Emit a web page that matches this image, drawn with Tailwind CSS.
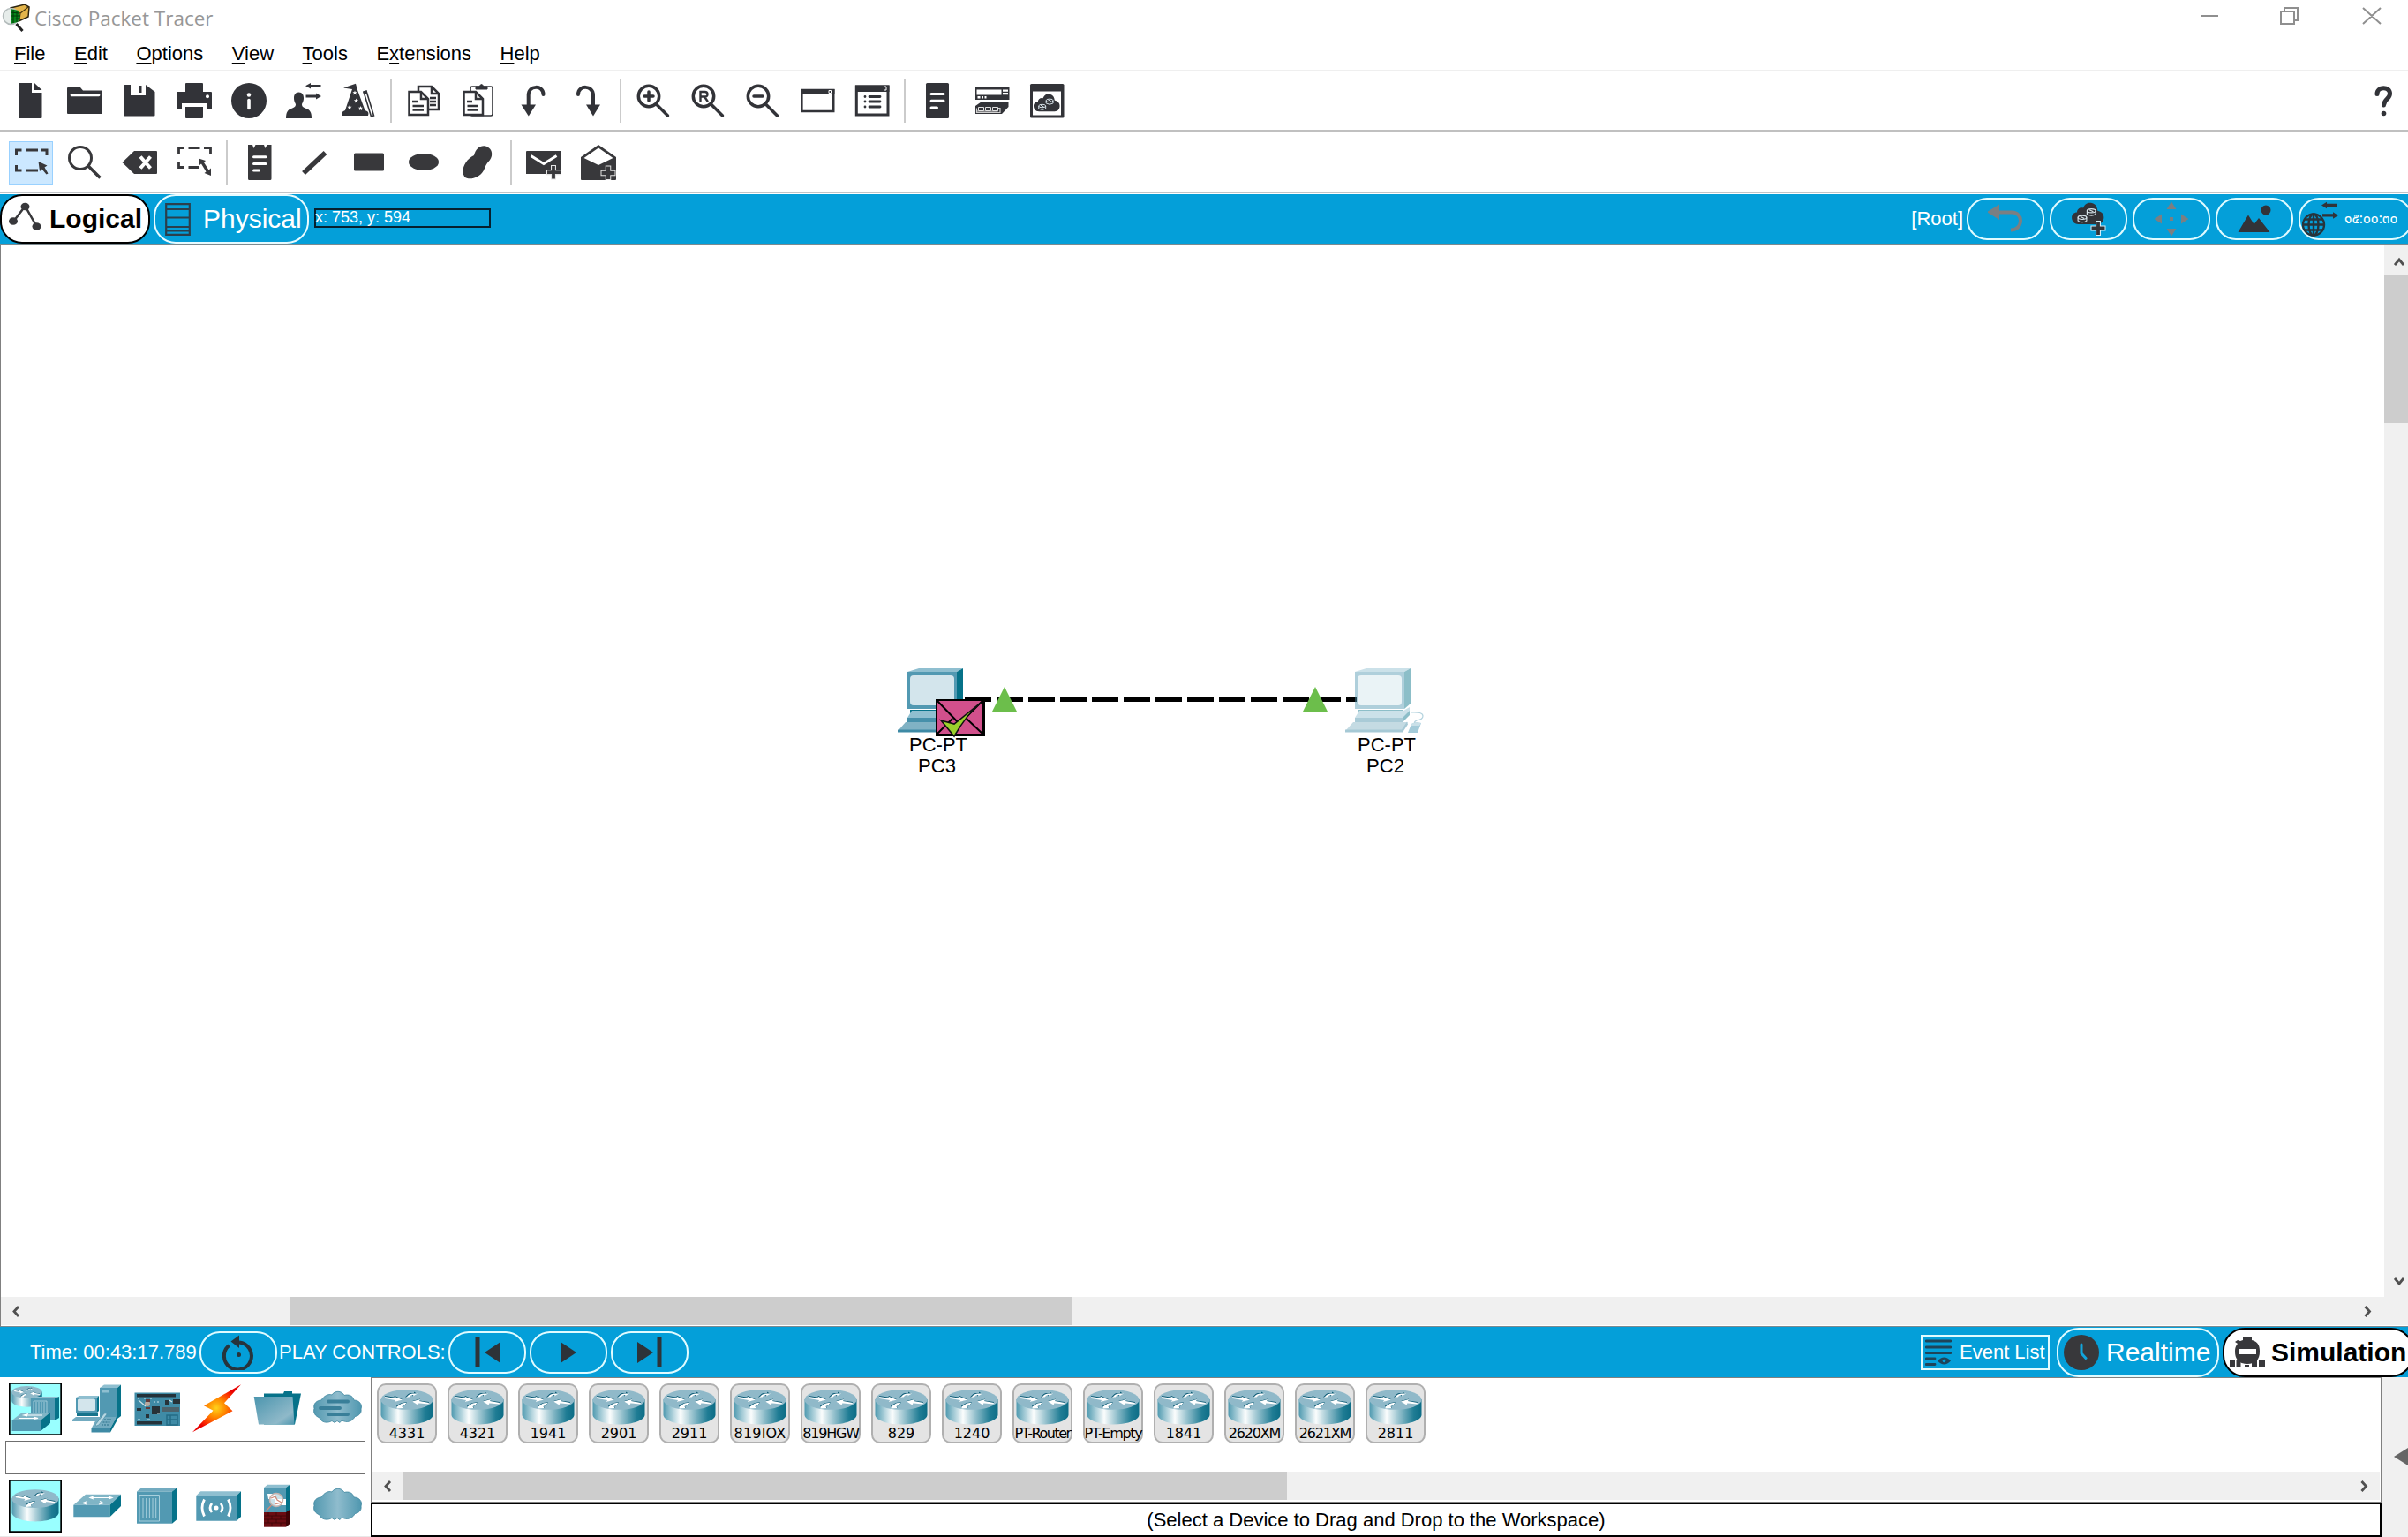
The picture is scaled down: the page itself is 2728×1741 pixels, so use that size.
<!DOCTYPE html>
<html lang="en">
<head>
<meta charset="utf-8">
<title>Cisco Packet Tracer</title>
<script src="https://cdn.jsdelivr.net/npm/@tailwindcss/browser@4"></script>
</head>
<body class="bg-white overflow-hidden">
<svg class="absolute w-0 h-0" aria-hidden="true">
  <defs>
    <linearGradient id="rb"><stop offset="0" stop-color="#4f9ab0"/><stop offset=".12" stop-color="#8fbfcd"/><stop offset=".33" stop-color="#fbfdfd"/><stop offset=".6" stop-color="#86b8c6"/><stop offset=".85" stop-color="#1f7c94"/><stop offset="1" stop-color="#0d6d86"/></linearGradient>
    <linearGradient id="cl"><stop offset="0" stop-color="#5399b0"/><stop offset=".5" stop-color="#8fbccd"/><stop offset="1" stop-color="#4f97af"/></linearGradient>
    <linearGradient id="fo" x1="0" y1="0" x2="1" y2="1"><stop offset="0" stop-color="#4b95ae"/><stop offset=".75" stop-color="#8fb9c9"/><stop offset="1" stop-color="#4b95ae"/></linearGradient>
    <radialGradient id="bo" gradientUnits="userSpaceOnUse" cx="29" cy="29" r="26"><stop offset="0" stop-color="#ffd21a"/><stop offset=".4" stop-color="#ff8a00"/><stop offset=".8" stop-color="#fb2a00"/><stop offset="1" stop-color="#e80000"/></radialGradient>
    <symbol id="router" viewBox="0 0 60 40" preserveAspectRatio="none">
      <path d="M.5 11V28.500C.5 34.500 13.500 39.500 30 39.500S59.500 34.500 59.500 28.500V11z" fill="url(#rb)"/>
      <ellipse cx="30" cy="11.500" rx="29.500" ry="11.300" fill="#90b9c9"/>
      <path d="M5 7l10 1.500 1-1.500 9 4-8 2.500 1-2L5.500 9zM28 8.500l3-3c2-2 4-1.500 7-1.500l0-1.500 3 2-5 3 .5-1.500c-2.500 0-3 .5-5 2.500zM36 13l9-2.500-1 2 11 1.500-.5 2-11-1-1 2zM18 18.500l5-3c2-1 4-1 7-1l-2 3-3 1.500 1 2-7 0z" fill="#0b5a75"/>
      <path d="M5 8l10 1.500 1-1.500 9 3.500-9 2.500 1-2L5.500 10zM29 9l3-3c2-1.500 4-1.500 7-1.500l3 0-5 3 .5-1.500c-2.500 0-3 .5-5 2.500zM36 13.500l9-2.500-1 2 11 2-.5 1.500-11-1-1 2zM18.500 19.500l5-3.500c2-1 3-1 6-1l-2 2.500-3 1.500 1 2-7 .5z" fill="#fff"/>
    </symbol>
    <symbol id="cloud" viewBox="0 0 60 60"><path d="M9 40C4 38 1.500 34 3 29.500 1.500 24 6 20 11 20 14 15 19 12.500 23 14 26 9 34 9 37 14.500 42 13 47 15 48 20 54 20 58 25 56 30 57 35 53 38 49 38.500 47 43.500 41 45.500 37 44L34 43 32 45.500 29 43.500 26 45.500 23 43.500C18 46.500 11 45.500 9 40z" fill="url(#cl)" stroke="#3f87a0" stroke-width=".8"/></symbol>
    <symbol id="pc" viewBox="0 0 100 76">
      <path d="M11 5L24 1H74L67 5z" fill="#8fbfd0"/><path d="M67 5l7-4v40l-7 6z" fill="#067289"/><path d="M11 5H67V47H11z" fill="#5299b2"/><path d="M14 13q0-4 4-4H60q4 0 4 4V39q0 4-4 4H18q-4 0-4-4z" fill="#d3e5ec"/>
      <path d="M14 48H66V52H14z" fill="#067289"/><path d="M11 57l5-8H66l7-4v6l-8 11H11z" fill="#8fbfd0"/><path d="M11 57H65v5H11z" fill="#4690aa"/><path d="M65 57l8-8v5l-8 8z" fill="#067289"/><path d="M16 62H64V67H16z" fill="#0c7890"/>
      <path d="M8 61H70L64 70H0z" transform="translate(1 1)" fill="#80b2c4"/><path d="M0 70H64l6-9 1 3-6 9H0z" transform="translate(0 .5)" fill="#3e8aa5"/>
    </symbol>
    <symbol id="netcloud" viewBox="0 0 34 24"><path d="M7 23C2 23 0 19.500 0 16 0 12.500 2.500 10.500 5.500 10.500 5.500 7 9 5 12 6 14 1 18 0 21 1 25 2 26.500 5 27 9 31 10 33.500 12 33.500 16 33.500 20 31 23 27 23z" fill="#323338"/><g fill="none" stroke="#d8e4ea" stroke-width="1.100"><ellipse cx="11" cy="16" rx="4.500" ry="2"/><path d="M6.500 16v3.500q4.500 3 9 0V16"/><ellipse cx="20.500" cy="9" rx="4.500" ry="2"/><path d="M16 9v3.500q4.500 3 9 0V9M9 15l4 2M18.500 8l4 2"/></g></symbol>
  </defs>
</svg>

<div class="w-[2728px] h-[1741px] flex flex-col overflow-hidden bg-white font-['Liberation_Sans',Arial,sans-serif] text-[22px] text-black leading-none">

  <!-- Title bar -->
  <header class="h-[41px] shrink-0 flex items-start justify-between">
    <div class="flex items-start">
      <svg class="w-[34px] h-[36px] ml-[2px] mt-[2px]" viewBox="0 0 34 36"><path d="M10 7L26 3 31 6 30 17 19 22 11 12z" fill="#e3b44a" stroke="#2b2310" stroke-width="1.500"/><path d="M11 8l10 5 9-7M21 13l-1 8" fill="none" stroke="#4a3810" stroke-width="1.200"/><circle cx="10.500" cy="16.500" r="9" fill="#e6ecea" stroke="#b4bcbc" stroke-width="1.500"/><path d="M10 8l9 2 2 7-3 6-8 2z" fill="#07851a"/><path d="M10 12l9 1M10 16h11M10 20l9-1M13 9v15M17 10v13" stroke="#023b08"/><path d="M16.500 25l7 8" stroke="#222" stroke-width="3"/></svg>
      <div class="ml-[3px] mt-[7px] font-['Open_Sans',sans-serif] text-[22.500px] text-[#979797] leading-[28px] whitespace-nowrap">Cisco Packet Tracer</div>
    </div>
    <svg class="w-[220px] h-[36px] mr-[23px]" viewBox="0 0 220 36" fill="none" stroke="#8f8f8f" stroke-width="2"><path d="M8 18H28M99 13h15v14h-15zM103 13V9h15v14h-4M192 9l20 18M212 9l-20 18"/></svg>
  </header>

  <!-- Menu bar -->
  <nav class="h-[39px] shrink-0 flex items-center gap-[32.500px] pl-[16px] pt-[2px] border-b border-[#efefef] [&_u]:underline-offset-[3px] [&_u]:decoration-[1px]">
    <span><u>F</u>ile</span><span><u>E</u>dit</span><span><u>O</u>ptions</span><span><u>V</u>iew</span><span><u>T</u>ools</span><span>E<u>x</u>tensions</span><span><u>H</u>elp</span>
  </nav>

  <!-- Main toolbar -->
  <div class="h-[69px] shrink-0 flex items-start justify-between border-b-2 border-[#c0c0c0] pl-[3px]">
    <div class="flex items-start text-[#323338] [&>div]:w-[62px] [&>div]:pt-[14px] [&>div]:flex [&>div]:justify-center [&_svg]:w-[40px] [&_svg]:h-[40px] [&>i]:w-[2px] [&>i]:h-[50px] [&>i]:mt-[9px] [&>i]:mx-[5px] [&>i]:bg-[#cbcbcb]">
      <div><svg viewBox="0 0 40 40" fill="currentColor"><path d="M8 0H22V11H33.500V39q0 1-1 1H8q-1 0-1-1V1q0-1 1-1zM25 0l8.500 8H25z"/></svg></div>
      <div><svg viewBox="0 0 40 40" fill="currentColor"><path d="M1 5H15l3 3.500H39q1 0 1 1V34q0 1-1 1H1q-1 0-1-1V6q0-1 1-1z"/><path d="M5 13.800H36" stroke="#fff" stroke-width="2.800" stroke-linecap="round"/></svg></div>
      <div><svg viewBox="0 0 40 40" fill="currentColor"><path d="M3.500 2H10V14H27V2L37.500 10V36.500q0 1-1 1H3.500q-1 0-1-1V3q0-1 1-1zM19 3h3.500v8H19z"/></svg></div>
      <div><svg viewBox="0 0 40 40" fill="currentColor"><path d="M11 0H29q1 0 1 1V10H39q1 0 1 1V29q0 1-1 1H34V23H6V30H1q-1 0-1-1V11q0-1 1-1H10V1q0-1 1-1zM10 27H30V39q0 1-1 1H11q-1 0-1-1z"/><circle cx="35" cy="15.300" r="2" fill="#fff"/></svg></div>
      <div><svg viewBox="0 0 40 40"><circle cx="20" cy="20" r="20" fill="currentColor"/><circle cx="20" cy="13.500" r="2.200" fill="#fff"/><path d="M20 19.500V28.500" stroke="#fff" stroke-width="3.600" stroke-linecap="round"/></svg></div>
      <div><svg viewBox="0 0 40 40" fill="currentColor"><path d="M14.500 10.500c4 0 5.500 3 5.500 6.500 0 4-1.500 5.500-2 7 0 3 1.500 3.500 5 5 4 1.500 6 4 6 11H0c0-7 2-9.500 6-11 3.500-1.500 5-2 5-5-.5-1.500-2-3-2-7 0-3.500 1.500-6.500 5.500-6.500z"/><path d="M22 3.300l6-3.300v2h11.500v2.800H28v1.800zM40 15l-6-3.400v2H22.500v2.800H34v2z"/></svg></div>
      <div><svg viewBox="0 0 40 40"><path d="M3 5.500L17 .8 19 8l8.500 23c4 1 4.500 3 3.500 6H2c-1.500-3 0-5 3-6L13 7z" fill="currentColor"/><g fill="#fff"><path id="st" d="M16 8.500l.7 1.700 1.900.1-1.500 1.200.5 1.900-1.600-1-1.600 1 .5-1.900-1.500-1.200 1.900-.1z"/><use href="#st" x="1.500" y="9"/><use href="#st" x="-6" y="16.500"/><use href="#st" x="6.500" y="17.500"/></g><path d="M26 10l3-1 8.500 28-3 1z" fill="#fff" stroke="currentColor" stroke-width="1.600"/><path d="M25.300 10l4-1.200.9 3-4 1z" fill="currentColor"/></svg></div>
      <i></i>
      <div><svg viewBox="0 0 40 40" fill="#fff" stroke="currentColor" stroke-width="2.500"><path d="M14 4H29l8 8V30H14z"/><path d="M29 4v8h8M27 17h7M27 21h7M27 25h7" fill="none"/><path d="M3.500 10H17l8 8V36H3.500z"/><path d="M17 10v8h8M7 21H13M7.500 26H20M7.500 30.500H20" fill="none"/></svg></div>
      <div><svg viewBox="0 0 40 40" fill="#fff" stroke="currentColor" stroke-width="2.500"><rect x="11" y="4" width="25" height="33" rx="2" stroke-width="1.600"/><path d="M17 7V4h4q2.500-5 5 0h4v3z" fill="currentColor" stroke-width="1"/><path d="M3.500 10H17l8 8V36H3.500z"/><path d="M17 10v8h8M7 21H13M7.500 26H20M7.500 30.500H20" fill="none"/></svg></div>
      <div><svg viewBox="0 0 40 40"><path d="M14.700 26V14C14.700 2 31.500 2 31.500 13" fill="none" stroke="currentColor" stroke-width="4" stroke-linecap="round"/><path d="M6.500 24.500H23L14.800 37.500z" fill="currentColor"/></svg></div>
      <div><svg viewBox="0 0 40 40"><path d="M26 26V14C26 2 9 2 9 13" fill="none" stroke="currentColor" stroke-width="4" stroke-linecap="round"/><path d="M18 24.500H34L26 37.500z" fill="currentColor"/></svg></div>
      <i></i>
      <div><svg viewBox="0 0 40 40" fill="none" stroke="currentColor" stroke-width="3.500" stroke-linecap="round"><circle cx="15" cy="15" r="11.700"/><path d="M23.500 24L36.500 37M10 15H20M15 10V20"/></svg></div>
      <div><svg viewBox="0 0 40 40" fill="none" stroke="currentColor" stroke-width="3.500" stroke-linecap="round"><circle cx="15" cy="15" r="11.700"/><path d="M23.500 24L36.500 37"/><path d="M11.500 20.500V10H16.500q3 0 3 2.800T16.500 15.500H12M16 15.500l3.500 5" stroke-width="2.400"/></svg></div>
      <div><svg viewBox="0 0 40 40" fill="none" stroke="currentColor" stroke-width="3.500" stroke-linecap="round"><circle cx="15" cy="15" r="11.700"/><path d="M23.500 24L36.500 37M10 15H20"/></svg></div>
      <div><svg viewBox="0 0 40 40"><path d="M2.300 8H38.200V32H2.300z" fill="none" stroke="currentColor" stroke-width="2.600"/><path d="M1 7H39.500V13H1z" fill="currentColor"/><path d="M33 8.500h2.500v3H33z" fill="none" stroke="#fff"/></svg></div>
      <div><svg viewBox="0 0 40 40"><path d="M2.300 4H38V36H2.300z" fill="none" stroke="currentColor" stroke-width="3"/><path d="M1 2.500H39.500V10H1z" fill="currentColor"/><path d="M33.500 4h2.500v4h-2.500z" fill="none" stroke="#fff"/><path d="M12 15.500h0M17 15.500H29M12 21h0M17 21H29M12 27h0M17 27H29" stroke="currentColor" stroke-width="2.800" stroke-linecap="round"/></svg></div>
      <i></i>
      <div><svg viewBox="0 0 40 40"><rect x="7" y="0" width="26" height="40" rx="1.500" fill="currentColor"/><path d="M13 12.500H27M13 20.300H27M13 28H19.500" stroke="#fff" stroke-width="3" stroke-linecap="round"/></svg></div>
      <div><svg viewBox="0 0 40 40"><path d="M1 5H39.500V19H1z" fill="currentColor"/><path d="M2.500 7.500H30.500V13.500H2.500zM32 7.500h6v2.200h-6zM32 11h6v2.200h-6zM3.500 15h3v2.500h-3zM8 15h2v2.500H8zM11.500 15h2v2.500h-2z" fill="#fff"/><path d="M1 26l6.500-4.500H38.500V27L31 35H1z" fill="currentColor"/><path d="M2.500 28.500V33.500H29V28.500H26v3.500H2.500" fill="none" stroke="#cfcfcf" stroke-width="1.200"/><path d="M4.500 27.500h6v4h-6zM12.500 27.500h6v4h-6zM20.500 27.500h6v4h-6z" fill="#323338" stroke="#e0e0e0"/></svg></div>
      <div><svg viewBox="0 0 40 40"><rect x="1" y="1" width="38.500" height="38.500" rx="1.500" fill="currentColor"/><path d="M4 9.500H36V36.500H4z" fill="#fff"/><use href="#netcloud" x="5" y="11.500" width="30" height="22"/></svg></div>
    </div>
    <svg class="w-[22px] h-[36px] mt-[16px] mr-[17px]" viewBox="0 0 22 36"><path d="M4 10.500C4 1.500 18.500 1.500 18.500 10c0 6-6.500 6-7 13" fill="none" stroke="#323338" stroke-width="5" stroke-linecap="round"/><circle cx="11.500" cy="32.500" r="2.800" fill="#323338"/></svg>
  </div>

  <!-- Drawing toolbar -->
  <div class="h-[70px] shrink-0 flex items-start border-b-2 border-[#c0c4c8] pl-[3px] text-[#38383b] [&>div]:w-[62px] [&>div]:pt-[15px] [&>div]:flex [&>div]:justify-center [&_svg]:w-[40px] [&_svg]:h-[40px] [&>i]:w-[2px] [&>i]:h-[50px] [&>i]:mt-[10px] [&>i]:mx-[5px] [&>i]:bg-[#cbcbcb]">
    <span class="w-[62px] flex pt-[11px] pl-[7px]"><span class="w-[50px] h-[49px] bg-[#cce8ff] border border-[#99d1ff] flex justify-center pt-[3px]"><svg viewBox="0 0 40 40"><path d="M3.500 12V6H9.500M14.500 6H28M32 6h6V12M3.500 23V29H9.500M14.500 29H28" fill="none" stroke="currentColor" stroke-width="3"/><path d="M30 19l10 4.500-3 2 4 7-2 1-5-6-2.500 2.500z" transform="translate(-1.500 0)" fill="currentColor"/></svg></span></span>
    <div><svg viewBox="0 0 40 40" fill="none" stroke="currentColor" stroke-width="3"><circle cx="15" cy="15" r="12.500"/><path d="M24 24L37.500 37.500" stroke-width="3.500"/></svg></div>
    <div><svg viewBox="0 0 40 40"><path d="M.5 20L14 7H39q1 0 1 1V32q0 1-1 1H14z" fill="currentColor"/><path d="M21 13.500L32.500 26.500M32.500 13.500L21 26.500" stroke="#fff" stroke-width="4"/></svg></div>
    <div><svg viewBox="0 0 40 40"><path d="M2.500 10V3.500H8M13.500 3.500H26.500M31 3.500h7.500V10M2.500 19V25.500H8M13.500 25.500H26" fill="none" stroke="currentColor" stroke-width="2.800"/><path d="M25 15.500l8 2.500-2 2 5.500 8.500 2.500-2V35l-7.500-3 2-1.500L28 21.500l-2.500 2z" fill="currentColor"/></svg></div>
    <i></i>
    <div><svg viewBox="0 0 40 40"><path d="M7 0h5l1.500 4L15.500 0H25l1.500 4L28.500 0H33.500V38.500q0 1.500-1.500 1.500H8.500Q7 40 7 38.500z" fill="currentColor"/><path d="M13.500 13.800H27M13.500 21.500H27M13.500 29H19.500" stroke="#fff" stroke-width="3" stroke-linecap="round"/></svg></div>
    <div><svg viewBox="0 0 40 40"><path d="M8 32L32.500 9" stroke="currentColor" stroke-width="5.500"/></svg></div>
    <div><svg viewBox="0 0 40 40"><rect x="3" y="9.500" width="34" height="20" rx="1.500" fill="currentColor"/></svg></div>
    <div><svg viewBox="0 0 40 40"><ellipse cx="20" cy="19.500" rx="17" ry="9.500" fill="currentColor"/></svg></div>
    <div><svg viewBox="0 0 40 40"><path d="M15 12C17 4 22 .5 28 1.500 37 4 37 14 31 19.500 28 23 28 25 26 29 21 38 10 40 5 37-1 31 4 17 15 12z" fill="currentColor"/></svg></div>
    <i></i>
    <div><svg viewBox="0 0 40 40"><path d="M1 7H39q1 0 1 1V33H0V8q0-1 1-1z" fill="currentColor"/><path d="M5.500 12.500L20 21.500 34.500 12.500" fill="none" stroke="#fff" stroke-width="3"/><path d="M31 23v16.500M23 31.200H40" stroke="#e4e4e4" stroke-width="6"/><path d="M31 24v14.500M24 31.200H39" stroke="currentColor" stroke-width="3.800"/></svg></div>
    <div><svg viewBox="0 0 40 40"><path d="M0 14L20 0 40 14V39q0 1-1 1H1q-1 0-1-1z" fill="currentColor"/><path d="M3.500 15L20 3.500 36.500 15 20 23z" fill="#fff"/><path d="M31 23.500V40M22.500 32H39.500" stroke="#e4e4e4" stroke-width="6.500"/><path d="M31 24.500V39M23.500 32H38.500" stroke="currentColor" stroke-width="4.500"/></svg></div>
  </div>

  <!-- Workspace navigation -->
  <div class="h-[58px] shrink-0 border-t border-t-white border-b border-b-[#7c8a90] bg-[#049fd9] flex items-start justify-between text-white">
    <div class="flex items-start">
      <div class="w-[170px] h-[56px] bg-white border-2 border-black rounded-[25px] flex items-center pl-[6px] text-black font-bold text-[30px] whitespace-nowrap">
        <svg class="w-[40px] h-[40px] shrink-0 mr-[8px]" viewBox="0 0 40 40"><path d="M7.500 22.500L20.500 5.500 33.500 28.500" fill="none" stroke="#38383b" stroke-width="2.500"/><g fill="#38383b"><ellipse cx="20.500" cy="6" rx="5" ry="4.300"/><ellipse cx="7" cy="22.500" rx="5" ry="4.300"/><ellipse cx="33.500" cy="28.500" rx="5" ry="4.300"/></g></svg>Logical</div>
      <div class="w-[176px] h-[56px] ml-[4px] border-2 border-[#e8fbff] rounded-[25px] flex items-center pl-[11px] text-[30px] whitespace-nowrap">
        <svg class="w-[29px] h-[37px] shrink-0 mr-[14px]" viewBox="0 0 29 37" fill="none" stroke="#2b3f4c" stroke-width="2.200"><path d="M1.200 1.200H27.800V35.800H1.200zM1 7H28M1 16.500H28M1 27H28M1 31.500H28"/></svg>Physical</div>
      <div class="w-[200px] h-[22px] mt-[16px] ml-[6px] border-2 border-[#06202e] flex items-center text-[18px] pb-[3px] whitespace-nowrap"><span class="-ml-[1px]">x: 753, y: 594</span></div>
    </div>
    <div class="flex items-start pt-[4px] [&>div]:w-[88px] [&>div]:h-[48px] [&>div]:shrink-0 [&>div]:border-2 [&>div]:border-[#e0fbff] [&>div]:rounded-[23px] [&>div]:flex [&>div]:items-center [&>div]:justify-center">
      <span class="h-[47px] flex items-center mr-[4px]">[Root]</span>
      <div><svg class="w-[40px] h-[40px]" viewBox="0 0 40 40"><path d="M11 12.500H27C41 12.500 40 32.500 26 32.500" fill="none" stroke="#7b7f82" stroke-width="4"/><path d="M13 3.500V21L-1 12z" fill="#7b7f82"/></svg></div>
      <div class="ml-[6px]"><svg class="w-[40px] h-[40px]" viewBox="0 0 40 40"><use href="#netcloud" x="1" y="1" width="37" height="26"/><path d="M31 22v17M22.500 30.500H39.500" stroke="#d5edf6" stroke-width="6"/><path d="M31 23v15M23.500 30.500H38.500" stroke="#323338" stroke-width="3.800"/></svg></div>
      <div class="ml-[6px]"><svg class="w-[40px] h-[40px]" viewBox="0 0 40 40" fill="#7b7f82"><path d="M20 .5l5.500 8.500h-11zM20 39.500l5.500-8.500h-11zM.5 20l8.500-5.500v11zM39.500 20l-8.500-5.500v11zM18 18h4v4h-4z"/></svg></div>
      <div class="ml-[6px]"><svg class="w-[40px] h-[40px]" viewBox="0 0 40 40" fill="#323338"><path d="M1.500 35L13 15.500 19.500 26 25 19 37.500 35z"/><circle cx="33" cy="10" r="5.500"/></svg></div>
      <span class="ml-[6px] mr-[-5px] w-[129px] h-[48px] border-2 border-[#e0fbff] rounded-[23px] flex items-center pl-[2px]">
        <svg class="w-[42px] h-[42px] shrink-0" viewBox="0 0 42 42"><g fill="none" stroke="#27343c" stroke-width="2.400"><circle cx="13" cy="27.500" r="12"/><ellipse cx="13" cy="27.500" rx="5.500" ry="12"/><path d="M13 15.500v24M1 27.500h24M3 21.500h20M3 33.500h20"/></g><path d="M22 5.500l6-3.700v2h12v3.200H28v2.200zM41 17l-6-3.700v2H23v3.200h12v2.200z" fill="#323338"/></svg>
        <span class="ml-[6px] mt-[2px] text-[15.500px] w-[72px] whitespace-nowrap font-['Noto_Sans_Thai','Noto_Sans','DejaVu_Sans',sans-serif]">๑๕:๐๐:๓๐</span>
      </span>
    </div>
  </div>

  <!-- Workspace canvas -->
  <div class="h-[1226px] shrink-0 flex flex-col border-l border-[#808080] border-b border-b-[#7c8a90]">
    <div class="h-[1192px] flex">
      <main class="relative flex-1">
        <svg class="absolute left-[1092px] top-[512px] w-[444px] h-[6px]" viewBox="0 0 444 6"><path d="M0 3H444" stroke="#000" stroke-width="6" stroke-dasharray="30 6"/></svg>
        <svg class="absolute left-[1016px] top-[479px] w-[100px] h-[76px]"><use href="#pc"/></svg>
        <svg class="absolute left-[1523px] top-[479px] w-[100px] h-[76px]"><use href="#pc" opacity=".46"/><path d="M74 51q14-1 14 4 0 4-7 5-4 2-2 4" fill="none" stroke="#b4d3de" stroke-width="1.200"/><path d="M75 64l5-2 6 1-4 11H71z" fill="#a3cbd9"/><path d="M75 64l5-2 6 1-2 3H74z" fill="#c9e0e8"/></svg>
        <svg class="absolute left-[1059px] top-[514px] w-[57px] h-[46px]" viewBox="0 0 57 46"><path d="M0 1H56V43H0z"/><path d="M2 3H53V40H2z" fill="#d2508c"/><path d="M2 3L27 29 53 3M2 40L19 23M53 40L35 23" fill="none" stroke="#000" stroke-width="2"/><path d="M6 25l15 4L51 5Q36 17 21 43z" fill="#9bd12c" stroke="#111" stroke-width="1.600"/></svg>
        <svg class="absolute left-[1123px] top-[501px] w-[28px] h-[28px]" viewBox="0 0 28 28"><path d="M14 0l14 28H0z" fill="#6cbe4b"/></svg>
        <svg class="absolute left-[1475px] top-[501px] w-[28px] h-[28px]" viewBox="0 0 28 28"><path d="M14 0l14 28H0z" fill="#6cbe4b"/></svg>
        <div class="absolute left-[1012px] top-[555px] w-[100px] text-center leading-[24px]">PC-PT<br><span class="mr-[3px]">PC3</span></div>
        <div class="absolute left-[1520px] top-[555px] w-[100px] text-center leading-[24px]">PC-PT<br><span class="mr-[3px]">PC2</span></div>
      </main>
      <div class="w-[27px] bg-[#f0f0f0] flex flex-col items-end justify-between">
        <div class="w-full h-[202px] flex flex-col items-center pt-[1px]">
          <svg class="h-[34px] w-[12px] ml-[6px] shrink-0" viewBox="0 0 12 34"><path d="M1 22l5-6 5 6" fill="none" stroke="#505050" stroke-width="2.800"/></svg>
          <div class="w-full flex-1 bg-[#cdcdcd]"></div>
        </div>
        <svg class="h-[34px] w-[12px] mr-[4px]" viewBox="0 0 12 34"><path d="M1 13l5 6 5-6" fill="none" stroke="#505050" stroke-width="2.800"/></svg>
      </div>
    </div>
    <div class="h-[32px] bg-[#f0f0f0] flex items-center">
      <svg class="w-[327px] h-[32px]" viewBox="0 0 327 32"><path d="M20 11l-5 5.500 5 5.500" fill="none" stroke="#505050" stroke-width="2.800"/></svg>
      <div class="w-[886px] h-full bg-[#cdcdcd]"></div>
      <svg class="w-[12px] h-[32px] ml-auto mr-[40px]" viewBox="0 0 12 32"><path d="M3.500 11l5 5.500-5 5.500" fill="none" stroke="#505050" stroke-width="2.800"/></svg>
    </div>
  </div>

  <!-- Simulation controls -->
  <div class="h-[57px] shrink-0 bg-[#049fd9] flex items-start justify-between text-white pt-[1px] whitespace-nowrap">
    <div class="h-[56px] flex items-center pl-[34px] [&>div]:w-[88px] [&>div]:h-[48px] [&>div]:border-2 [&>div]:border-[#e0fbff] [&>div]:rounded-[23px] [&>div]:flex [&>div]:items-center [&>div]:justify-center [&_svg]:w-[40px] [&_svg]:h-[40px]">
      <span class="w-[192px]">Time: 00:43:17.789</span>
      <div><svg viewBox="0 0 40 40"><path d="M9.500 11A15.500 15.500 0 1 0 21 7.500" transform="translate(0 1)" fill="none" stroke="#27343c" stroke-width="4"/><path d="M21 .5V15L11.500 7.500z" fill="#27343c"/><circle cx="20.500" cy="22.500" r="2.500" fill="#27343c"/></svg></div>
      <span class="w-[194px] pl-[2px]">PLAY CONTROLS:</span>
      <div><svg viewBox="0 0 40 40" fill="#2d3338"><path d="M6.500 3h5v34h-5zM35 8v24L17 20z"/></svg></div>
      <div class="ml-[4px]"><svg viewBox="0 0 40 40" fill="#2d3338"><path d="M11 8v24L29 20z"/></svg></div>
      <div class="ml-[4px]"><svg viewBox="0 0 40 40" fill="#2d3338"><path d="M6 8v24L24 20zM28.500 3h5v34h-5z"/></svg></div>
    </div>
    <div class="flex items-start">
      <div class="w-[146px] h-[40px] mt-[8px] border-2 border-[#e0fbff] flex items-center pl-[3px]">
        <svg class="w-[30px] h-[32px] mr-[9px] shrink-0" viewBox="0 0 30 32"><path d="M1 3H29M1 10H29M1 16.500H29M1 23H11M1 29.500H11" stroke="#1f4459" stroke-width="2.800" stroke-linecap="round"/><path d="M14 25.500q7.500-8 15 0-7.500 8-15 0z" fill="#1f4459"/><circle cx="21.500" cy="25.500" r="1.800" fill="#049fd9"/></svg>Event List</div>
      <div class="w-[184px] h-[56px] ml-[8px] border-2 border-[#e0fbff] rounded-[25px] flex items-center pl-[6px] text-[30px]">
        <svg class="w-[40px] h-[40px] mr-[8px] shrink-0" viewBox="0 0 40 40"><circle cx="20" cy="20" r="20" fill="#38383b"/><path d="M20 11V21l5 5.500" fill="none" stroke="#12a5dc" stroke-width="3" stroke-linecap="round"/></svg>Realtime</div>
      <div class="w-[216px] h-[56px] ml-[4px] mr-[-6px] bg-white text-black border-2 border-black rounded-[25px] flex items-center pl-[6px] font-bold text-[30px]">
        <svg class="w-[40px] h-[36px] mr-[7px] shrink-0" viewBox="0 0 40 36"><path d="M15 0H25V4C32 6 34 10 34 17 34 26 29 31 20 31S6 26 6 17C6 13 7 10 9 8L6 6 9 4l3 1 3-1z" fill="#38383b"/><path d="M10 14H30v6H10z" fill="#fff"/><path d="M0 27H6V35H0zM7.500 27h5V35h-5zM17 32h5v3h-5zM25 27h6v8h-6zM33 27h7v8h-7z" fill="#38383b"/></svg>Simulation</div>
    </div>
  </div>

  <!-- Device palette -->
  <footer class="h-[181px] shrink-0 flex bg-white">
    <section class="w-[420px] flex flex-col pl-[6px] pt-[6px] gap-[6px] border-b border-[#e8e8e8] [&_svg]:block">
      <div class="h-[60px] flex [&>div]:w-[68.500px] [&>div]:flex [&>div]:justify-center [&_svg]:w-[60px] [&_svg]:h-[60px]">
        <div><svg viewBox="0 0 60 60"><path d="M.8.800H59.200V59.200H.800z" fill="#9ff" stroke="#000" stroke-width="1.800"/><use href="#router" x="3" y="4" width="35" height="24"/><path d="M25 18l5-2H57l-5 2z" fill="#8fbfd0"/><path d="M25 18H52V43H25z" fill="#5299b2"/><path d="M52 18l5-2V40l-5 3z" fill="#067289"/><path d="M28 21H43V40H28zM31 22V39M34 22V39M37 22V39M40 22V39" fill="none" stroke="#a9d0dd" stroke-width=".9"/><path d="M3.500 43L15 34H47L36 43z" fill="#80b5c6"/><path d="M3.500 43H36V55H3.500z" fill="#5299b2"/><path d="M36 43L47 34V46L36 55z" fill="#067289"/><path d="M18 37H38M12 40.500H32M22 35.500l-5 1.500 4 1M28 39l5 1.500-5 1" fill="none" stroke="#fff" stroke-width="1.200"/></svg></div>
        <div><svg viewBox="0 0 60 60"><path d="M34 6l5-3.500H58L54 6z" fill="#8fbfd0"/><path d="M34 6H54V41H34z" fill="#5299b2"/><path d="M54 6l4-3.500V38l-4 3z" fill="#067289"/><path d="M36 8.500h9v3h-9z" fill="#8fbfd0"/><path d="M7 17l4-2H33l-2 2z" fill="#8fbfd0"/><path d="M7 17H31V34H7z" fill="#5299b2"/><path d="M31 17l2-2V32l-2 2z" fill="#067289"/><rect x="9" y="18.500" width="20" height="13.500" rx="1.500" fill="#d3e5ec"/><path d="M8 35H32V38H8z" fill="#16738b"/><path d="M3 42l4-3H33l-3 5H3z" fill="#73abc0"/><path d="M24.500 52l7-13H53L46 52z" fill="#73abc0"/><path d="M24.500 52H46V56.500H24.500z" fill="#3f8aa5"/><path d="M46 52l7-13v5l-7 12.500z" fill="#067289"/><path d="M29 48l10-13q3-1 3 1L33 48q-3 2-4 0z" fill="#b8d7e2" stroke="#4b8ca5" stroke-width=".7"/><path d="M39 42H47M37.500 45H45.500M36 48H44" stroke="#286f88" stroke-dasharray="2 1"/></svg></div>
        <div><svg viewBox="0 0 60 60"><path d="M5.500 11.500H57V49H5.500z" fill="#3f8ba6"/><path d="M8 13H52V16.500H8zM8 44H37V47.500H8z" fill="#24323a"/><path d="M25 27h9v9h-9zM40 20h5v5h-5zM49 19h8v5h-8zM18 36h4v4h-4zM8 29h5v3H8z" fill="#273238"/><path d="M37 28H56V33H37z" fill="#4c626b"/><path d="M42 37H54V48H42zM46 37V48M42 42H54" fill="none" stroke="#246c85" stroke-width="1.500"/><circle cx="20" cy="24" r="3" fill="#b9a9a0"/><path d="M18 19h5v3h-5zM18 28h5v2h-5z" fill="#653b3b"/><path d="M10 20l8 7M27 22h2M31 22h2M9 18h2M16 18h2M23 18h2M9 42h3M20 42h3M31 35h3M45 20l3 2" stroke="#cde3e9" stroke-width="1.200"/></svg></div>
        <div><svg viewBox="0 0 60 60"><path d="M57 2.300L38 23.300 47.500 32.300 2 56.300 25.500 31.700 15 26.300z" fill="url(#bo)"/></svg></div>
        <div><svg viewBox="0 0 60 60"><path d="M15 12.500H37L38 10h9v2.500H57L50 47.500H15z" fill="#067289"/><path d="M3.700 16H47.500L49.500 47.500H9z" fill="url(#fo)"/></svg></div>
        <div><svg viewBox="0 0 60 60"><use href="#cloud"/><path d="M19 21.500H41M10 29H32M19 36H41" stroke="#397f99" stroke-width="4" stroke-linecap="round"/></svg></div>
      </div>
      <div class="w-[408px] h-[38px] border border-[#6f6f6f]"></div>
      <div class="h-[60px] flex [&>div]:w-[68.500px] [&>div]:flex [&>div]:justify-center [&_svg]:w-[60px] [&_svg]:h-[60px]">
        <div><svg viewBox="0 0 60 60"><path d="M.8.800H59.200V59.200H.800z" fill="#9ff" stroke="#000" stroke-width="1.800"/><use href="#router" x="3" y="11" width="54" height="37"/></svg></div>
        <div><svg viewBox="0 0 60 60"><path d="M4.300 28.700L18 16.700H58L45.500 28.700z" fill="#80b5c6"/><path d="M4.300 28.700H45.500V42.300H4.300z" fill="#5299b2"/><path d="M45.500 28.700L58 16.700V30L45.500 42.300z" fill="#067289"/><path d="M25 20.500H47M16 26.500H36M28 18.500l-5 2 4 1.500M34 24.500l4 2-5 1.500M44 19l4 1.500-4 1.500M20 24.500l-5 2 4 1.500" fill="none" stroke="#fff" stroke-width="1.200"/></svg></div>
        <div><svg viewBox="0 0 60 60"><path d="M8 13.500l5-4H53l-5 4z" fill="#73abc0"/><path d="M8 13.500H48V49.700H8z" fill="#5299b2"/><path d="M48 13.500l5-4V45.500l-5 4.200z" fill="#067289"/><path d="M11 17.500H33.500V47H11zM15 21V44M18.700 21V44M22.400 21V44M26 21V44M29.700 21V44" fill="none" stroke="#a9d0dd" stroke-width="1"/></svg></div>
        <div><svg viewBox="0 0 60 60"><path d="M6.300 18l5-4.700H57L52 18z" fill="#8fbfd0"/><path d="M6.300 18H52V46.700H6.300z" fill="#5299b2"/><path d="M52 18l5-4.700V42L52 46.700z" fill="#067289"/><circle cx="29" cy="32" r="2.500" fill="#fff"/><path d="M24 27q-4 5 0 10M34 27q4 5 0 10M15.500 22.500q-5 9.500 0 19M42.500 22.500q5 9.500 0 19" fill="none" stroke="#fff" stroke-width="2.800"/></svg></div>
        <div><svg viewBox="0 0 60 60"><path d="M15 9l4-3.300H44.400L40 9z" fill="#8fbfd0"/><path d="M15 9H40V37H15z" fill="#5299b2"/><path d="M40 9l4.400-3.300V35L40 38z" fill="#067289"/><path d="M15 37H40V53.700H15z" fill="#6b0c12"/><path d="M40 37l4.400-3V50L40 53.700z" fill="#3f0306"/><path d="M15 41H40M15 45H40M15 49H40M20 37v4M29 37v4M24 41v4M34 41v4M20 45v4M29 45v4M24 49v4M34 49v4" stroke="#3a0507" stroke-width=".8"/><path d="M19 16h9v6h-8zM28 22h12v7H28z" fill="#fff"/><circle cx="29" cy="23" r="7.500" fill="#fff" fill-opacity=".7" stroke="#c8b3ad" stroke-width="1.600"/><path d="M23 21l5-2 2 4 5 3-8 2M23.500 29L17 36" fill="none" stroke="#d08a78" stroke-width="1.200"/></svg></div>
        <div><svg viewBox="0 0 60 60"><use href="#cloud"/></svg></div>
      </div>
    </section>

    <section class="w-[2278px] flex flex-col">
      <div class="h-[142px] border border-[#808080] flex flex-col justify-between">
        <ul class="flex pl-[6px] pt-[6px] gap-[12px] font-['DejaVu_Sans',Verdana,sans-serif] text-[16px] [&>li]:w-[68px] [&>li]:h-[68px] [&>li]:border-2 [&>li]:border-[#b0b0b0] [&>li]:rounded-[10px] [&>li]:bg-[#e4e4e4] [&>li]:flex [&>li]:flex-col [&>li]:items-center [&>li]:pt-[5px] [&>li]:whitespace-nowrap [&>li]:leading-[20px] [&_svg]:w-[60px] [&_svg]:h-[40px] [&_svg]:shrink-0">
          <li><svg><use href="#router"/></svg>4331</li>
          <li><svg><use href="#router"/></svg>4321</li>
          <li><svg><use href="#router"/></svg>1941</li>
          <li><svg><use href="#router"/></svg>2901</li>
          <li><svg><use href="#router"/></svg>2911</li>
          <li><svg><use href="#router"/></svg><span class="tracking-[0.200px]">819IOX</span></li>
          <li><svg><use href="#router"/></svg><span class="tracking-[-1.200px]">819HGW</span></li>
          <li><svg><use href="#router"/></svg>829</li>
          <li><svg><use href="#router"/></svg>1240</li>
          <li><svg><use href="#router"/></svg><span class="tracking-[-1.500px]">PT-Router</span></li>
          <li><svg><use href="#router"/></svg><span class="tracking-[-1.300px]">PT-Empty</span></li>
          <li><svg><use href="#router"/></svg>1841</li>
          <li><svg><use href="#router"/></svg><span class="tracking-[-1.200px]">2620XM</span></li>
          <li><svg><use href="#router"/></svg><span class="tracking-[-1.200px]">2621XM</span></li>
          <li><svg><use href="#router"/></svg>2811</li>
        </ul>
        <div class="h-[32px] mb-[2px] mx-px bg-[#f0f0f0] flex items-center">
          <svg class="w-[34px] h-[32px]" viewBox="0 0 34 32"><path d="M20 11l-5 5.500 5 5.500" fill="none" stroke="#505050" stroke-width="2.800"/></svg>
          <div class="w-[1002px] h-full bg-[#cdcdcd]"></div>
          <svg class="w-[12px] h-[32px] ml-auto mr-[12px]" viewBox="0 0 12 32"><path d="M3.500 11l5 5.500-5 5.500" fill="none" stroke="#505050" stroke-width="2.800"/></svg>
        </div>
      </div>
      <div class="h-[39px] border-2 border-black flex items-center justify-center pt-px">(Select a Device to Drag and Drop to the Workspace)</div>
    </section>
    <aside class="flex-1 bg-[#f0f0f0] flex justify-end pt-[80px]"><svg class="w-[16px] h-[20px]" viewBox="0 0 16 20"><path d="M0 10L16 0V20z" fill="#666"/></svg></aside>
  </footer>
</div>
</body>
</html>
